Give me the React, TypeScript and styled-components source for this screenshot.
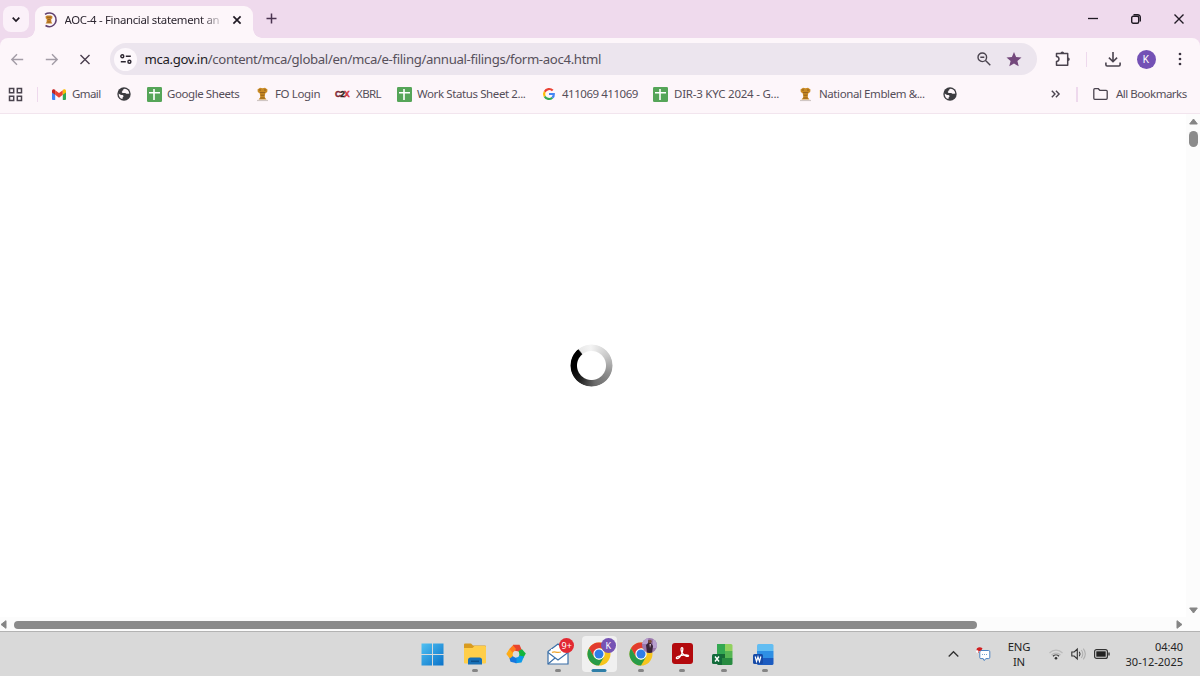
import React from "react";
import styled, { createGlobalStyle } from "styled-components";

const Global = createGlobalStyle`
  * { box-sizing: border-box; }
  body { margin: 0; background: #fff; overflow: hidden; font-family: "Noto Sans", "Open Sans", sans-serif; }
  svg { display: block; flex: none; overflow: visible; }
`;

const Screen = styled.div`
  width: 1200px;
  height: 676px;
  display: flex;
  flex-direction: column;
`;

/* ---------- tab strip ---------- */
const TabStrip = styled.header`
  height: 38px;
  flex: none;
  display: flex;
  background: #efdaed;
`;
const TabSearch = styled.button`
  width: 26px;
  height: 26px;
  margin: 6px 0 0 3px;
  padding: 0;
  border: 0;
  border-radius: 8px;
  background: #fbf1f9;
  display: grid;
  place-items: center;
`;
const Tab = styled.div`
  position: relative;
  width: 218px;
  height: 32px;
  margin: 6px 0 0 6px;
  padding: 0 9px 5px 8px;
  border-radius: 9px 9px 0 0;
  background: #fdf6fa;
  display: flex;
  align-items: center;
  &::before, &::after {
    content: "";
    position: absolute;
    bottom: 0;
    width: 9px;
    height: 9px;
  }
  &::before { left: -9px; background: radial-gradient(circle at 0 0, transparent 8.5px, #fdf6fa 9px); }
  &::after { right: -9px; background: radial-gradient(circle at 100% 0, transparent 8.5px, #fdf6fa 9px); }
`;
const TabTitle = styled.span`
  width: 157px;
  margin-left: 6.5px;
  white-space: nowrap;
  font-size: 11.4px;
  line-height: 18px;
  letter-spacing: -0.31px;
  color: #2c2630;
  mask-image: linear-gradient(90deg, #000 136px, transparent 160px);
`;
const TabClose = styled.span`
  margin-left: 11.5px;
`;
const NewTab = styled.div`
  margin: 13px 0 0 13px;
`;
const WindowControls = styled.div`
  margin-left: auto;
  height: 37px;
  padding-right: 16px;
  display: flex;
  align-items: center;
  gap: 33px;
`;

/* ---------- toolbar ---------- */
const ToolbarBack = styled.div`
  flex: none;
  background: #efdaed;
`;
const Toolbar = styled.div`
  height: 42px;
  display: flex;
  align-items: center;
  padding: 0 14px 0 11px;
  border-radius: 8px 8px 0 0;
  background: #fdf6fa;
`;
const NavButtons = styled.nav`
  width: 99px;
  display: flex;
  gap: 20.5px;
`;
const Omnibox = styled.div`
  width: 927px;
  height: 32px;
  padding: 0 15px 0 4px;
  border-radius: 16px;
  background: #ece5ee;
  display: flex;
  align-items: center;
`;
const SiteChip = styled.span`
  width: 23px;
  height: 23px;
  border-radius: 50%;
  background: #fdf8fc;
  display: grid;
  place-items: center;
`;
const Url = styled.span`
  flex: 1;
  margin-left: 7.5px;
  font-size: 13.2px;
  line-height: 20px;
  letter-spacing: -0.345px;
  white-space: nowrap;
  color: #57505b;
  b { font-weight: 400; color: #211b24; }
`;
const OmniboxActions = styled.span`
  display: flex;
  align-items: center;
  gap: 15px;
`;
const Divider = styled.i<{ $left: number; $right: number }>`
  width: 1.5px;
  height: 15px;
  flex: none;
  margin: 0 ${(p) => p.$right}px 0 ${(p) => p.$left}px;
  background: #eed9ed;
`;
const ToolbarActions = styled.div`
  flex: 1;
  padding-left: 18px;
  display: flex;
  align-items: center;
`;
const Avatar = styled.span`
  width: 19px;
  height: 19px;
  margin: 0 22px 0 16px;
  border-radius: 50%;
  background: #7451b5;
  color: #fff;
  font: 10px/19px Roboto, sans-serif;
  text-align: center;
`;

/* ---------- bookmarks bar ---------- */
const BookmarksBar = styled.div`
  height: 34px;
  flex: none;
  display: flex;
  align-items: center;
  padding: 0 0 5px 8px;
  border-bottom: 1.5px solid #f2e5ee;
  background: #fdf6fa;
`;
const Bookmark = styled.a<{ $width: number }>`
  width: ${(p) => p.$width}px;
  flex: none;
  display: flex;
  align-items: center;
`;
const Label = styled.span<{ $gap: number; $track: number }>`
  margin-left: ${(p) => p.$gap}px;
  font-size: 11.5px;
  line-height: 18px;
  letter-spacing: ${(p) => p.$track}px;
  white-space: nowrap;
  color: #554e59;
`;
const SiteWordmark = styled.span`
  width: 15px;
  font: 900 8.5px/12px "Liberation Sans", sans-serif;
  letter-spacing: -0.9px;
  color: #d0323b;
  -webkit-text-stroke: 0.4px currentColor;
  b { color: #2d2021; }
  i { color: #7c2733; font-style: normal; }
`;

/* ---------- page ---------- */
const Page = styled.main`
  flex: 1;
  display: flex;
  min-height: 0;
  background: #fff;
`;
const PageBody = styled.section`
  flex: 1;
  display: grid;
  place-items: center;
  padding: 0 3px 0 0;
`;
const Spinner = styled.div`
  width: 43px;
  height: 43px;
  border-radius: 50%;
  background: conic-gradient(from -37deg, #e9e9e9 0deg, #f4f4f4 35deg, #c8c8c8 95deg, #909090 150deg, #6c6c6c 205deg, #222 255deg, #000 300deg, #000 356deg, #e9e9e9 360deg);
  mask-image: radial-gradient(circle, transparent 14px, #000 15px, #000 20.5px, transparent 21.5px);
`;
const VScroll = styled.div`
  width: 14px;
  display: flex;
  flex-direction: column;
  align-items: center;
  padding: 4px 0 3px;
  background: #fcfcfc;
`;
const VThumb = styled.div`
  width: 9px;
  height: 16px;
  margin: 6px 0 auto;
  border-radius: 4.5px;
  background: #8b8b8b;
`;
const HScroll = styled.div`
  height: 14px;
  flex: none;
  display: flex;
  align-items: center;
  padding: 1px 17px 0 0;
  background: #fcfcfc;
`;
const HThumb = styled.div`
  width: 963px;
  height: 8px;
  margin: 0 auto 0 7px;
  border-radius: 4px;
  background: #8b8b8b;
`;

/* ---------- taskbar ---------- */
const Taskbar = styled.footer`
  height: 45px;
  flex: none;
  display: flex;
  padding-left: 412.5px;
  border-top: 1.5px solid #b3b3b3;
  background: #d9d9d9;
`;
const Apps = styled.div`
  display: flex;
  width: 374px;
`;
const AppSlot = styled.div<{ $active?: boolean; $inset?: number }>`
  position: relative;
  width: 35px;
  height: 36px;
  margin: 4px 3.25px 0;
  padding-right: ${(p) => p.$inset ?? 0}px;
  border-radius: 4px;
  display: grid;
  place-items: center;
  background: ${(p) => (p.$active ? "#f0f0f0" : "transparent")};
`;
const Running = styled.i<{ $active?: boolean }>`
  position: absolute;
  bottom: 0;
  left: 50%;
  width: ${(p) => (p.$active ? 15 : 6)}px;
  height: 3px;
  border-radius: 1.5px;
  transform: translateX(-50%);
  background: ${(p) => (p.$active ? "#2f7fa8" : "#858585")};
`;
const Badge = styled.span<{ $tone: string }>`
  position: absolute;
  top: 2px;
  right: 1px;
  width: 15px;
  height: 15px;
  border-radius: 50%;
  background: ${(p) => p.$tone};
  color: #fff;
  font: 9px/15px "Noto Sans", sans-serif;
  text-align: center;
`;
const PhotoBadge = styled(Badge)`
  overflow: hidden;
`;
const Tray = styled.div`
  margin-left: auto;
  padding-right: 17px;
  display: flex;
  align-items: center;
`;
const Language = styled.span`
  width: 32px;
  font-size: 11.3px;
  line-height: 15px;
  letter-spacing: -0.25px;
  text-align: center;
  color: #252525;
`;
const Clock = styled.time`
  width: 61px;
  display: flex;
  flex-direction: column;
  align-items: flex-end;
  font-size: 11px;
  line-height: 15px;
  white-space: nowrap;
  color: #252525;
`;
const TrayIcons = styled.span`
  width: 61px;
  margin: 0 12.5px 0 13.5px;
  display: flex;
  align-items: center;
  gap: 8px;
`;

/* ---------- icons ---------- */
const Emblem = () => (
  <svg width="13" height="15" viewBox="0 0 13 15">
    <path d="M1.500 2.500 4 .8l2.500.5L9 .8l2.500 1.700-.3 2.600-2 1.400-.5 3.700 1.800 2.300h-8l1.800-2.300-.5-3.700-2-1.400z" fill="#c98a24" />
    <path d="M3 3h2M8 3h2M4 5.600h5M4.800 8.200h3.400M4.200 11h4.600" stroke="#84561a" strokeWidth=".8" />
    <path d="M1 13.500h11" stroke="#cfc6c4" strokeWidth="1.200" />
  </svg>
);
const SiteEmblem = () => (
  <svg width="15" height="16" viewBox="0 0 15 16">
    <path d="M2 2.300C5 .3 9.300.5 11.500 3.200 14 6.200 13.500 10.700 10.700 13 8.500 14.800 5 15 2.500 13.500" fill="none" stroke="#60406f" strokeWidth="1.600" />
    <path d="m2.500 4.500 1.500-.9h4l1.500.9-.3 2-1 .6.2 3 1 1.500H2.600l1-1.500.2-3-1-.6z" fill="#c58228" />
    <path d="M4 5.300h4M5 7.500h2.200M4.500 10h3" stroke="#8a5a1d" strokeWidth=".8" />
  </svg>
);
const Globe = () => (
  <svg width="14" height="14" viewBox="0 0 14 14">
    <circle cx="7" cy="7" r="6.700" fill="#3c3c40" />
    <path d="M7.800 1.700c-1.500.2-1.900 1-1.700 1.800.2.700-.8.500-1.200 1.100-.3.600.2 1.300.9 1.300h2.300c.9 0 1 .8 1.800.9.900.1 1.500-.3 2.400-.3-.2-2.500-2-4.500-4.500-4.800z" fill="#fdf6fa" />
    <path d="M1.700 6.400c1 .5 1.600 1.500 2.800 1.500 1.400 0 2 .4 2 1.400 0 .9-.9.8-1 1.600v1.200C3 11.500 1.500 9.200 1.700 6.400z" fill="#fdf6fa" />
  </svg>
);
const SheetsIcon = () => (
  <svg width="15" height="15" viewBox="0 0 15 15">
    <rect width="15" height="15" rx="1.300" fill="#55a558" />
    <path d="M2 5.800h11M7 2v11" stroke="#fff" strokeWidth="1.600" />
  </svg>
);
const GmailIcon = () => (
  <svg width="14" height="11" viewBox="0 0 14 11">
    <path d="M0 2v8q0 1 1 1h2.200V3.500z" fill="#4285f4" />
    <path d="M14 2v8q0 1-1 1h-2.200V3.500z" fill="#34a853" />
    <path d="M3.200 5.800V1.200L7 4l3.800-2.800v4.600L7 8.700z" fill="#ea4335" />
    <path d="M0 2C0 .3 1.700-.4 3.200.8v5L0 3.400z" fill="#c5221f" />
    <path d="M14 2c0-1.700-1.700-2.400-3.200-1.200v5L14 3.400z" fill="#fbbc04" />
  </svg>
);
const GoogleG = () => (
  <svg width="12" height="12" viewBox="0 0 12 12" fill="none" strokeWidth="2.200">
    <path d="M9.700 2.600A4.900 4.900 0 0 0 1.700 3.700" stroke="#ea4335" />
    <path d="M1.700 3.700a4.900 4.900 0 0 0 0 4.700" stroke="#fbbc05" />
    <path d="M1.700 8.400a4.900 4.900 0 0 0 7.600 1.300" stroke="#34a853" />
    <path d="M9.300 9.700A4.500 4.500 0 0 0 10.800 6H6" stroke="#4285f4" />
  </svg>
);
const ArrowIcon = ({ flip }: { flip?: boolean }) => (
  <svg width="13" height="13" viewBox="0 0 13 13" fill="none" stroke="#a39ca6" strokeWidth="1.400">
    <path d={flip ? "M.8 6.500H12M7 1.300l5.200 5.200L7 11.700" : "M12.200 6.500H1M6 1.300.8 6.500 6 11.700"} />
  </svg>
);
const Cross = ({ size, width = 1.4 }: { size: number; width?: number }) => (
  <svg width={size} height={size} viewBox="0 0 10 10">
    <path d="m.5.5 9 9m0-9-9 9" fill="none" stroke="#201a24" strokeWidth={(width * 10) / size} />
  </svg>
);
const Chrome = () => (
  <svg width="24" height="24" viewBox="0 0 24 24">
    <circle cx="12" cy="12" r="11.500" fill="#f6c51e" />
    <path d="M2.040 6.250A11.500 11.500 0 0 1 21.960 6.250H12L7.020 14.900z" fill="#e23b2e" />
    <path d="M2.040 6.250A11.500 11.500 0 0 0 12 23.500L16.980 14.900 12 17.700 7.020 14.900z" fill="#279b48" />
    <circle cx="12" cy="12" r="5.700" fill="#fff" />
    <circle cx="12" cy="12" r="4.500" fill="#2f7de8" />
  </svg>
);
const Triangle = ({ d, w, h }: { d: string; w: number; h: number }) => (
  <svg width={w} height={h} viewBox={`0 0 ${w} ${h}`}><path d={d} fill="#858585" stroke="#858585" strokeLinejoin="round" /></svg>
);

const bookmarks = [
  { width: 65, icon: <GmailIcon />, gap: 6, text: "Gmail", track: -0.6 },
  { width: 30, icon: <Globe />, gap: 0, text: "", track: 0 },
  { width: 109, icon: <SheetsIcon />, gap: 5, text: "Google Sheets", track: -0.42 },
  { width: 79, icon: <Emblem />, gap: 6, text: "FO Login", track: -0.36 },
  { width: 62, icon: <SiteWordmark><i>C</i><b>2</b>X</SiteWordmark>, gap: 6, text: "XBRL", track: -0.6 },
  { width: 146, icon: <SheetsIcon />, gap: 5, text: "Work Status Sheet 2...", track: -0.4 },
  { width: 110, icon: <GoogleG />, gap: 7, text: "411069 411069", track: -0.46 },
  { width: 146, icon: <SheetsIcon />, gap: 6, text: "DIR-3 KYC 2024 - G...", track: -0.23 },
  { width: 144, icon: <Emblem />, gap: 7, text: "National Emblem &...", track: -0.41 },
  { width: 108, icon: <Globe />, gap: 0, text: "", track: 0 },
];

export default function App() {
  return (
    <Screen>
      <Global />
      <TabStrip>
        <TabSearch aria-label="Search tabs">
          <svg width="8" height="5" viewBox="0 0 8 5"><path d="m.7.7 3.300 3.300L7.300.7" fill="none" stroke="#201a24" strokeWidth="1.700" /></svg>
        </TabSearch>
        <Tab>
          <SiteEmblem />
          <TabTitle>AOC-4 - Financial statement an</TabTitle>
          <TabClose><Cross size={8} width={1.7} /></TabClose>
        </Tab>
        <NewTab>
          <svg width="11" height="11" viewBox="0 0 11 11"><path d="M5.500.5v10M.5 5.500h10" stroke="#4a3350" strokeWidth="1.500" /></svg>
        </NewTab>
        <WindowControls>
          <svg width="10" height="10" viewBox="0 0 10 10"><path d="M0 4.500h10" stroke="#201a24" strokeWidth="1.300" /></svg>
          <svg width="10" height="10" viewBox="0 0 10 10" fill="none" stroke="#201a24" strokeWidth="1.400">
            <rect x=".7" y="2.300" width="7" height="7" rx="1.500" />
            <path d="M2.500.8h4.200A2.600 2.600 0 0 1 9.300 3.400v4.200" />
          </svg>
          <Cross size={10} />
        </WindowControls>
      </TabStrip>

      <ToolbarBack>
        <Toolbar>
          <NavButtons>
            <ArrowIcon />
            <ArrowIcon flip />
            <svg width="13" height="13" viewBox="0 0 13 13"><path d="m2.500 2 9 9m0-9-9 9" stroke="#4a3e4e" strokeWidth="1.400" /></svg>
          </NavButtons>
          <Omnibox>
            <SiteChip>
              <svg width="12" height="10" viewBox="0 0 12 10" fill="none" stroke="#2c2630" strokeWidth="1.400">
                <circle cx="2.300" cy="2.200" r="1.500" /><path d="M5.800 2.200h5M.8 7.800h5" /><circle cx="9.400" cy="7.800" r="1.500" />
              </svg>
            </SiteChip>
            <Url><b>mca.gov.in</b>/content/mca/global/en/mca/e-filing/annual-filings/form-aoc4.html</Url>
            <OmniboxActions>
              <svg width="14" height="14" viewBox="0 0 14 14" fill="none" stroke="#4a434e" strokeWidth="1.400">
                <circle cx="5.300" cy="5.300" r="4.300" /><path d="m8.500 8.500 4.800 4.800M3.300 5.300h4" />
              </svg>
              <svg width="16" height="15" viewBox="0 0 16 15"><path d="m8 .1 2.100 5 5.400.4-4.100 3.500 1.300 5.300L8 11.500l-4.700 2.800 1.300-5.300L.5 5.500l5.400-.4z" fill="#74487c" /></svg>
            </OmniboxActions>
          </Omnibox>
          <ToolbarActions>
            <svg width="16" height="16" viewBox="0 0 16 16" fill="none" stroke="#4a434e" strokeWidth="1.500">
              <path d="M1.500 2.500h11.200v11.700H1.500v-3.600c3.300-.4 3.300-4.600 0-5z" strokeLinejoin="round" />
              <path d="M5.500 2.200a1.800 1.800 0 0 1 3.600 0zM13 6.500a1.800 1.800 0 0 1 0 3.600z" fill="#4a434e" stroke="none" />
            </svg>
            <Divider $left={14.5} $right={17.5} />
            <svg width="16" height="15" viewBox="0 0 16 15" fill="none" stroke="#4a434e" strokeWidth="1.600">
              <path d="M8 0v9.500M3.900 5.600 8 9.700l4.100-4.100M.9 10.500v2.300q0 1.200 1.200 1.200h11.800q1.200 0 1.200-1.200v-2.300" />
            </svg>
            <Avatar>K</Avatar>
            <svg width="4" height="14" viewBox="0 0 4 14" fill="#3b3440"><circle cx="2" cy="2" r="1.350" /><circle cx="2" cy="7" r="1.350" /><circle cx="2" cy="12" r="1.350" /></svg>
          </ToolbarActions>
        </Toolbar>
      </ToolbarBack>

      <BookmarksBar>
        <svg width="15" height="15" viewBox="0 0 15 15" fill="none" stroke="#4a434e" strokeWidth="1.500">
          <path d="M1.500 1.500h4.200v4.200H1.500zM9.300 1.500h4.200v4.200H9.300zM1.500 9.300h4.200v4.200H1.500zM9.300 9.300h4.200v4.200H9.300z" />
        </svg>
        <Divider $left={13.5} $right={14} />
        {bookmarks.map((b, i) => (
          <Bookmark key={i} $width={b.width}>
            {b.icon}
            {b.text && <Label $gap={b.gap} $track={b.track}>{b.text}</Label>}
          </Bookmark>
        ))}
        <svg width="9" height="8" viewBox="0 0 9 8" fill="none" stroke="#4a434e" strokeWidth="1.400"><path d="m.8.7 3.200 3.300L.8 7.300M4.900.7 8.100 4 4.900 7.300" /></svg>
        <Divider $left={16} $right={15.5} />
        <svg width="15" height="12" viewBox="0 0 15 12"><path d="M.8 1.700q0-1 1-1h3.500l1.500 1.600h6.400q1 0 1 1v7q0 1-1 1H1.800q-1 0-1-1z" fill="none" stroke="#4a434e" strokeWidth="1.300" /></svg>
        <Label $gap={8} $track={-0.52}>All Bookmarks</Label>
      </BookmarksBar>

      <Page>
        <PageBody><Spinner /></PageBody>
        <VScroll>
          <Triangle w={9} h={7} d="M4.500 1 8.300 6H.7z" />
          <VThumb />
          <Triangle w={9} h={7} d="M4.500 6 8.300 1H.7z" />
        </VScroll>
      </Page>
      <HScroll>
        <Triangle w={7} h={9} d="M1 4.500 6 .7v7.600z" />
        <HThumb />
        <Triangle w={7} h={9} d="M6 4.500 1 .7v7.600z" />
      </HScroll>

      <Taskbar>
        <Apps>
          <AppSlot $inset={1}>
            <svg width="23" height="23" viewBox="0 0 23 23">
              <defs><linearGradient id="win" gradientUnits="userSpaceOnUse" x1="0" y1="0" x2="23" y2="23"><stop stopColor="#52c3f3" /><stop offset="1" stopColor="#0870c8" /></linearGradient></defs>
              <path d="M.5.5h10.500v10.500H.5zM12 .5h10.500v10.500H12zM.5 12h10.500v10.500H.5zM12 12h10.500v10.500H12z" fill="url(#win)" />
            </svg>
          </AppSlot>
          <AppSlot>
            <svg width="24" height="22" viewBox="0 0 24 22">
              <path d="M1 1.500Q1 .5 2 .5h6l2 2h12q1 0 1 1v4H1z" fill="#d89b20" />
              <path d="M1 5h8.500l2-2H22q1 0 1 1v15.500q0 1-1 1H2q-1 0-1-1z" fill="#ffce49" />
              <path d="M5 21.500V17q0-2.500 2.500-2.500h9Q19 14.500 19 17v4.500z" fill="#176fb5" />
              <path d="M8 18.300h8" stroke="#0b4f8b" strokeWidth="1.500" />
            </svg>
            <Running />
          </AppSlot>
          <AppSlot>
            <svg width="20" height="20" viewBox="0 0 20 20">
              <path d="M7 .8h6.500L16 6.500l-5 1.500-4-3z" fill="#e8432e" />
              <path d="M16 5.300 19.800 9.500 17 14.500l-4.500-2V7z" fill="#12b53c" />
              <path d="m18 12.500-2.500 6-6 .7-1-5 4.500-2.700z" fill="#0b9be8" />
              <path d="m10.500 19.200-6-1.500L2.800 12 7 11.500l3.500 3z" fill="#1676dd" />
              <path d="M3.800 14.500.3 10l3-5 5 1v5z" fill="#ffad16" />
              <path d="M3.300 5 7 1.200 10 5 7 9z" fill="#ff7c1d" />
              <circle cx="10" cy="10.300" r="3.300" fill="#dadada" />
            </svg>
          </AppSlot>
          <AppSlot>
            <svg width="22" height="22" viewBox="0 0 22 22">
              <path d="M1 8.500 11 1l10 7.500V21H1z" fill="#fff" stroke="#3a6fa8" strokeWidth="1.200" />
              <path d="M4 6h14v7l-7 4.500L4 13z" fill="#fff" />
              <path d="M1 9.500 11 17l10-7.500M1 21l7-6" fill="none" stroke="#3a6fa8" strokeWidth="1.100" />
              <path d="M5 9.500c3-2 4 1 9-.5" fill="none" stroke="#efa52d" strokeWidth="1.300" />
            </svg>
            <Badge $tone="#e22932">9+</Badge>
            <Running />
          </AppSlot>
          <AppSlot $active>
            <Chrome />
            <Badge $tone="#7653b4">K</Badge>
            <Running $active />
          </AppSlot>
          <AppSlot>
            <Chrome />
            <PhotoBadge $tone="#9b78ae">
              <svg width="15" height="15" viewBox="0 0 15 15">
                <path d="M0 0h6v6H0zM11 2h4v8h-4z" fill="#b8a0cf" />
                <path d="m5 15-1-8 2-2 .5-3h2L9 5l2 3-1 7z" fill="#3b2438" />
                <circle cx="8" cy="3.500" r="1.800" fill="#7b4c3e" /><path d="m7.500 6 .5 4 1-4" fill="#e4cddd" />
              </svg>
            </PhotoBadge>
            <Running />
          </AppSlot>
          <AppSlot>
            <svg width="21" height="22" viewBox="0 0 21 22">
              <rect width="21" height="21" rx="3" fill="#b3090d" />
              <path d="M4.600 15.500c-1.300-1 2-2.600 5-3.200 3.200-.7 7-.7 7 .5s-3.400.6-5.600-1.800C8.800 8.700 8.500 5 9.800 4.600c1.600-.4 1.200 3.400-.3 6.600-1.300 2.800-3.700 5.200-4.900 4.300z" fill="none" stroke="#fff" strokeWidth="1.300" />
            </svg>
            <Running />
          </AppSlot>
          <AppSlot $inset={3}>
            <svg width="21" height="21" viewBox="0 0 21 21">
              <path d="M5 0h8v10H5z" fill="#33a852" /><path d="M13 0h6q1.500 0 1.500 1.500V7H13z" fill="#91d15e" />
              <path d="M5 10h8v11H6.500Q5 21 5 19.500z" fill="#176b35" /><path d="M13 7h7.500v7H13z" fill="#56b653" /><path d="M10 14h10.500v5.500Q20.500 21 19 21h-9z" fill="#288b41" />
              <rect y="10" width="10" height="10" rx="1.500" fill="#126b3b" />
              <path d="m3 12.500 4 5m0-5-4 5" stroke="#fff" strokeWidth="1.400" />
            </svg>
            <Running />
          </AppSlot>
          <AppSlot $inset={4}>
            <svg width="21" height="21" viewBox="0 0 21 21">
              <path d="M4 7V1.500Q4 0 5.500 0H19q1.500 0 1.500 1.500V7z" fill="#62bdf2" /><path d="M4 7h16.500v7H4z" fill="#2e8fe4" /><path d="M4 14h16.500v5.500Q20.500 21 19 21H5.500Q4 21 4 19.500z" fill="#1b5bc0" />
              <rect y="10" width="10" height="10" rx="1.500" fill="#174aa6" />
              <path d="m2.200 12.500 1.300 5L5 13l1.500 4.500 1.300-5" fill="none" stroke="#fff" strokeWidth="1.200" />
            </svg>
            <Running />
          </AppSlot>
        </Apps>
        <Tray>
          <svg width="11" height="6" viewBox="0 0 11 6"><path d="m.7 5.500 4.800-4.800 4.800 4.800" fill="none" stroke="#303030" strokeWidth="1.300" /></svg>
          <svg width="44" height="16" viewBox="0 0 44 16">
            <path d="M20 7q-3.500-2.500-2-4.700 2.500-2 5.500 0L22 5h-2z" fill="#d21e20" /><circle cx="18.300" cy="5.500" r="1.200" fill="#fff" />
            <path d="M22 4.500h7.500q1.300 0 1.300 1.300v5.500q0 1.300-1.300 1.300H27L25 14.500l-.8-1.900h-2.400q-1 0-1-1V5.800z" fill="#fff" stroke="#3976bc" strokeWidth=".9" />
            <path d="M23 8.500h5.500" stroke="#77a2ce" strokeDasharray="1 1" />
          </svg>
          <Language>ENG<br />IN</Language>
          <TrayIcons>
            <svg width="14" height="12" viewBox="0 0 14 12" fill="none" strokeWidth="1.200">
              <path d="M.5 5a9 9 0 0 1 13 0M2.500 7a6.300 6.300 0 0 1 9 0" stroke="#bababa" /><path d="M4 8.200a4.300 4.300 0 0 1 6 0" stroke="#333" /><circle cx="7" cy="10.300" r="1.300" fill="#333" />
            </svg>
            <svg width="15" height="12" viewBox="0 0 15 12" fill="none" stroke="#333" strokeWidth="1.100">
              <path d="M.8 4h2.400L6.300 1v10L3.200 8H.8zM8.300 3.800q1.500 2.200 0 4.400" /><path d="M10.300 2q3 4 0 8M12.300.7q4 5.300 0 10.600" stroke="#b0b0b0" />
            </svg>
            <svg width="16" height="10" viewBox="0 0 16 10"><rect x=".6" y=".6" width="12.800" height="8.800" rx="2" fill="none" stroke="#333" strokeWidth="1.200" /><rect x="2.300" y="2.300" width="9.400" height="5.400" fill="#222" /><path d="M15 3.500v3" stroke="#333" strokeWidth="1.400" /></svg>
          </TrayIcons>
          <Clock><span>04:40</span><span>30-12-2025</span></Clock>
        </Tray>
      </Taskbar>
    </Screen>
  );
}
